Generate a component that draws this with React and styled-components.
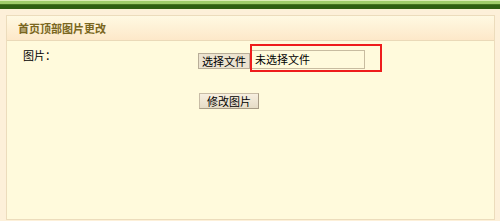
import React from "react";
import styled, { createGlobalStyle } from "styled-components";

const Global = createGlobalStyle`
  html, body { margin: 0; padding: 0; }
  body {
    background: #fdf0d9;
    font-family: "Noto Sans CJK SC", "Liberation Sans", sans-serif;
    font-size: 11px;
    color: #000;
  }
  * { box-sizing: border-box; }
`;

const Page = styled.div`
  width: 500px;
  height: 221px;
  display: flex;
  flex-direction: column;
  overflow: hidden;
`;

const TopStripe = styled.div`
  height: 9px;
  border-top: 1px solid #dcebb6;
  background: linear-gradient(to bottom, #9fcb6a 0, #9fcb6a 3px, #5c8c2c 3px, #2f5e12 4px, #2f5e12 8px);
`;

const Panel = styled.div`
  margin: 6px 5px 1px 6px;
  flex: 1;
  display: flex;
  flex-direction: column;
  border: 1px solid #ecdcbc;
  background: #fffadc;
`;

const Header = styled.div`
  height: 25px;
  display: flex;
  align-items: center;
  padding-left: 11px;
  background: linear-gradient(to bottom, #fff9e2, #fde8c9);
  border-bottom: 1px solid #ead9b8;
`;

const Title = styled.h2`
  margin: 0;
  font-size: 11px;
  font-weight: bold;
  color: #7a6620;
`;

const Body = styled.div`
  display: grid;
  grid-template-columns: 175px 1fr;
  row-gap: 21px;
  padding: 3px 0 0 16px;
`;

const Label = styled.div`
  align-self: start;
  margin-top: 3px;
  font-size: 11px;
  height: 16px;
  line-height: 16px;
`;

const FileWrap = styled.div`
  display: flex;
  align-items: flex-end;
  position: relative;
  height: 28px;
  padding-bottom: 3px;
`;

const FileButton = styled.button`
  font-family: inherit;
  font-size: 11px;
  width: 52px;
  height: 16px;
  padding: 0;
  line-height: 14px;
  background: #ece3d0;
  border: 1px solid #b8ad98;
  color: #000;
  margin: 0;
`;

const FileText = styled.div`
  width: 115px;
  height: 19px;
  line-height: 17px;
  border: 1px solid #c8bca0;
  padding-left: 4px;
  font-size: 11px;
  background: #fffadc;
`;

const Highlight = styled.div`
  position: absolute;
  left: 52px;
  top: 0;
  width: 132px;
  height: 28px;
  border: 2px solid #ee1c1c;
`;

const Submit = styled.button`
  grid-column: 2;
  justify-self: start;
  margin: 0 0 0 1px;
  font-family: inherit;
  font-size: 11px;
  width: 60px;
  height: 16px;
  line-height: 14px;
  padding: 0;
  background: linear-gradient(to bottom, #f7efe0, #e6dcc6);
  border: 1px solid #c8bca6;
  border-right-color: #a89c86;
  border-bottom-color: #a89c86;
  color: #000;
`;

export default function App() {
  return (
    <Page>
      <Global />
      <TopStripe />
      <Panel>
        <Header>
          <Title>首页顶部图片更改</Title>
        </Header>
        <Body>
          <Label>图片：</Label>
          <FileWrap>
            <FileButton>选择文件</FileButton>
            <FileText>未选择文件</FileText>
            <Highlight />
          </FileWrap>
          <Submit>修改图片</Submit>
        </Body>
      </Panel>
    </Page>
  );
}
